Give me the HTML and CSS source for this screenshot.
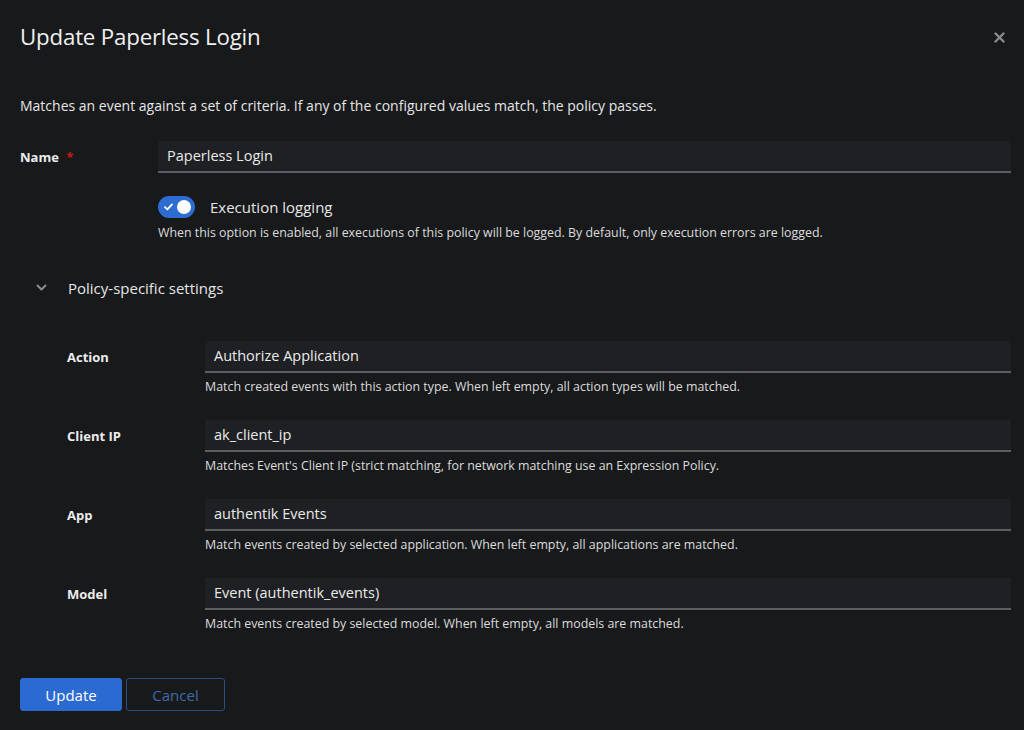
FILE: index.html
```html
<!DOCTYPE html>
<html lang="en">
<head>
<meta charset="utf-8">
<title>Update Paperless Login</title>
<link rel="stylesheet" href="styles.css">
</head>
<body>
<div class="modal">
  <header class="modal-header">
    <h1 class="modal-title">Update Paperless Login</h1>
    <button class="close" aria-label="Close">
      <svg width="11" height="11" viewBox="0 0 11 11"><path d="M1.5 1.5L9.5 9.5M9.5 1.5L1.5 9.5" stroke="#8a8d90" stroke-width="2.4" stroke-linecap="round"/></svg>
    </button>
  </header>
  <p class="description">Matches an event against a set of criteria. If any of the configured values match, the policy passes.</p>
  <form class="form">
    <div class="row">
      <label class="label">Name <span class="req">*</span></label>
      <div class="field">
        <div class="input">Paperless Login</div>
      </div>
    </div>
    <div class="row toggle-row">
      <div class="label"></div>
      <div class="field">
        <div class="switch-line">
          <span class="switch">
            <svg class="check" width="9" height="8" viewBox="0 0 9 8"><path d="M1 4.2L3.4 6.4L8 1.4" stroke="#fff" stroke-width="1.8" fill="none" stroke-linecap="round" stroke-linejoin="round"/></svg>
            <span class="knob"></span>
          </span>
          <span class="switch-label">Execution logging</span>
        </div>
        <div class="helper">When this option is enabled, all executions of this policy will be logged. By default, only execution errors are logged.</div>
      </div>
    </div>
    <section class="expandable">
      <div class="exp-head">
        <svg class="chev" width="11" height="8" viewBox="0 0 11 8"><path d="M1.5 1.5L5.5 5.5L9.5 1.5" stroke="#8a8d90" stroke-width="2" fill="none" stroke-linecap="round" stroke-linejoin="round"/></svg>
        <span class="exp-title">Policy-specific settings</span>
      </div>
      <div class="exp-body">
        <div class="row inner">
          <label class="label">Action</label>
          <div class="field">
            <div class="input">Authorize Application</div>
            <div class="helper">Match created events with this action type. When left empty, all action types will be matched.</div>
          </div>
        </div>
        <div class="row inner">
          <label class="label">Client IP</label>
          <div class="field">
            <div class="input">ak_client_ip</div>
            <div class="helper">Matches Event's Client IP (strict matching, for network matching use an Expression Policy.</div>
          </div>
        </div>
        <div class="row inner">
          <label class="label">App</label>
          <div class="field">
            <div class="input">authentik Events</div>
            <div class="helper">Match events created by selected application. When left empty, all applications are matched.</div>
          </div>
        </div>
        <div class="row inner">
          <label class="label">Model</label>
          <div class="field">
            <div class="input">Event (authentik_events)</div>
            <div class="helper">Match events created by selected model. When left empty, all models are matched.</div>
          </div>
        </div>
      </div>
    </section>
  </form>
  <footer class="actions">
    <button class="btn primary">Update</button>
    <button class="btn secondary">Cancel</button>
  </footer>
</div>
</body>
</html>
```
FILE: styles.css
```css
* { box-sizing: border-box; }
html, body {
  margin: 0;
  padding: 0;
  background: #18191b;
  color: #e0e0e0;
  font-family: "Open Sans", "Liberation Sans", sans-serif;
}
.modal {
  width: 1024px;
  height: 730px;
  padding: 0 13px 0 20px;
  background: #18191b;
}
.modal-header {
  display: flex;
  align-items: center;
  justify-content: space-between;
  height: 72px;
}
.modal-title {
  margin: 0;
  font-size: 22.3px;
  font-weight: 500;
  color: #f0f0f0;
  letter-spacing: -0.2px;
}
.close {
  background: none;
  border: 0;
  padding: 0;
  width: 12px;
  height: 12px;
  margin-right: 6px;
  margin-top: 2px;
  display: flex;
  align-items: center;
  justify-content: center;
}
.description {
  margin: 24px 0 0;
  font-size: 14px;
  line-height: 20px;
  color: #e6e6e6;
}
.form {
  margin-top: 25px;
}
.row {
  display: grid;
  grid-template-columns: 138px 1fr;
  align-items: start;
}
.label {
  font-size: 13px;
  font-weight: 700;
  color: #ececec;
  line-height: 32px;
}
.req { color: #c9190b; margin-left: 4px; }
.input {
  height: 32px;
  line-height: 30px;
  padding: 0 9px;
  background: #1f2023;
  border-bottom: 2px solid #5b5e63;
  font-size: 14.5px;
  color: #eaeaea;
}
.toggle-row { margin-top: 23px; }
.switch-line {
  display: flex;
  align-items: center;
  gap: 15px;
}
.switch {
  position: relative;
  width: 37px;
  height: 22px;
  border-radius: 11px;
  background: #2d6cd0;
  display: inline-flex;
  align-items: center;
}
.check { position: absolute; left: 6px; top: 7px; }
.knob {
  position: absolute;
  right: 4px;
  top: 4px;
  width: 14px;
  height: 14px;
  border-radius: 50%;
  background: #fff;
}
.switch-label {
  font-size: 15px;
  color: #e6e6e6;
}
.helper {
  margin-top: 5px;
  font-size: 12.4px;
  line-height: 18px;
  color: #dcdcdc;
}
.toggle-row .helper { margin-top: 6px; }
.expandable {
  margin-top: 34px;
}
.exp-head {
  display: flex;
  align-items: center;
  height: 24px;
  padding-left: 16px;
}
.chev { margin-right: 21px; }
.exp-title {
  font-size: 15px;
  color: #e6e6e6;
}
.exp-body {
  padding-left: 47px;
  margin-top: 41px;
  display: flex;
  flex-direction: column;
  gap: 24px;
}
.actions {
  margin-top: 45px;
  display: flex;
  gap: 4px;
}
.btn {
  height: 33px;
  border-radius: 3px;
  font-family: inherit;
  font-size: 15px;
  padding: 0;
}
.primary {
  width: 102px;
  background: #2b6ad0;
  border: 1px solid #2b6ad0;
  color: #fff;
}
.secondary {
  width: 99px;
  background: transparent;
  border: 1px solid #2a4f85;
  color: #3f6aa8;
}
```
